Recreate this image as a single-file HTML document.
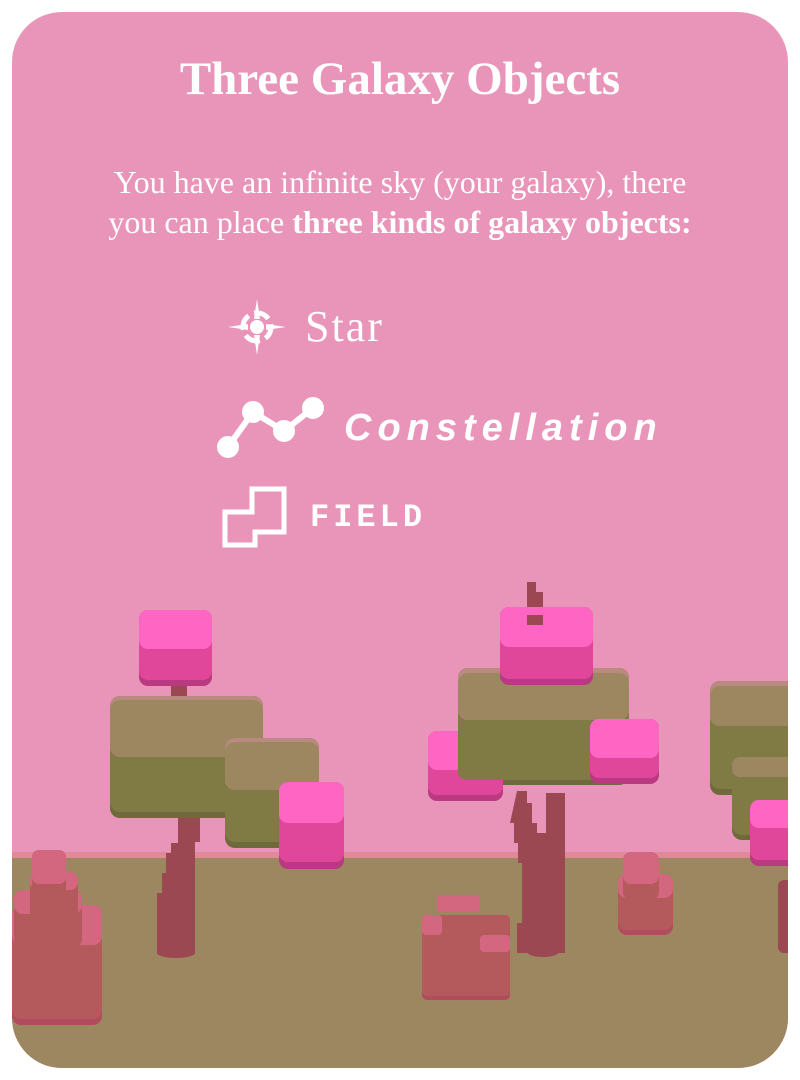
<!DOCTYPE html>
<html><head><meta charset="utf-8"><style>
html,body{margin:0;padding:0;background:#fff;}
body{width:800px;height:1080px;position:relative;overflow:hidden;}
.card{position:absolute;left:12px;top:12px;width:776px;height:1056px;border-radius:50px;background:#e994b9;overflow:hidden;}
.t{position:absolute;left:0;width:800px;text-align:center;color:#fff;font-family:"Liberation Serif",serif;}
</style></head><body>
<div class="card"></div>
<svg style="position:absolute;left:0;top:0" width="800" height="1080">
<defs><clipPath id="c"><rect x="12" y="12" width="776" height="1056" rx="50"/></clipPath></defs>
<g clip-path="url(#c)">
<rect x="0" y="852" width="800" height="8" fill="#e08a98"/>
<rect x="0" y="858" width="800" height="230" fill="#9d8760"/>
<rect x="171" y="680" width="16" height="48" rx="3" fill="#9c4852"/>
<rect x="139" y="610" width="73" height="76" rx="9" fill="#b93a80"/>
<rect x="139" y="610" width="73" height="70" rx="9" fill="#e0479a"/>
<rect x="139" y="610" width="73" height="39" rx="9" fill="#ff66c4"/>
<path d="M178 812h22v30h-5v111h-38v-60h5v-20h4v-20h5v-10h7z" fill="#9c4852"/>
<ellipse cx="176" cy="953" rx="19" ry="5" fill="#9c4852"/>
<rect x="110" y="696" width="153" height="122" rx="10" fill="#6f6a3c"/>
<rect x="110" y="696" width="153" height="116" rx="10" fill="#807a44"/>
<rect x="110" y="696" width="153" height="61" rx="10" fill="#b88a80"/>
<rect x="110" y="700" width="153" height="57" rx="10" fill="#9d8760"/>
<rect x="225" y="738" width="94" height="110" rx="10" fill="#6f6a3c"/>
<rect x="225" y="738" width="94" height="104" rx="10" fill="#807a44"/>
<rect x="225" y="738" width="94" height="52" rx="10" fill="#b88a80"/>
<rect x="225" y="742" width="94" height="48" rx="10" fill="#9d8760"/>
<rect x="279" y="782" width="65" height="87" rx="9" fill="#b93a80"/>
<rect x="279" y="782" width="65" height="80" rx="9" fill="#e0479a"/>
<rect x="279" y="782" width="65" height="41" rx="9" fill="#ff66c4"/>
<rect x="12" y="905" width="90" height="120" rx="9" fill="#b04c5e"/>
<rect x="12" y="905" width="90" height="114" rx="9" fill="#b55a5c"/>
<rect x="12" y="905" width="90" height="40" rx="9" fill="#d3677f"/>
<rect x="14" y="890" width="68" height="58" rx="9" fill="#b55a5c"/>
<rect x="14" y="890" width="68" height="24" rx="9" fill="#d3677f"/>
<rect x="30" y="872" width="48" height="52" rx="8" fill="#b55a5c"/>
<rect x="30" y="872" width="48" height="18" rx="8" fill="#d3677f"/>
<rect x="32" y="850" width="34" height="50" rx="7" fill="#b55a5c"/>
<rect x="32" y="850" width="34" height="34" rx="7" fill="#d3677f"/>
<path d="M527 582h9v10h7v33h-16z" fill="#9c4852"/>
<rect x="533" y="680" width="16" height="26" rx="3" fill="#9c4852"/>
<path d="M517 791h10v12h5v20h5v10h9v-40h19v160h-48v-30h5v-60h-4v-20h-4v-20h-4z" fill="#9c4852"/>
<ellipse cx="543" cy="952" rx="16" ry="5" fill="#9c4852"/>
<rect x="458" y="668" width="171" height="117" rx="10" fill="#6f6a3c"/>
<rect x="458" y="668" width="171" height="112" rx="10" fill="#807a44"/>
<rect x="458" y="668" width="171" height="52" rx="10" fill="#b88a80"/>
<rect x="458" y="673" width="171" height="47" rx="10" fill="#9d8760"/>
<rect x="500" y="607" width="93" height="78" rx="9" fill="#b93a80"/>
<rect x="500" y="607" width="93" height="72" rx="9" fill="#e0479a"/>
<rect x="500" y="607" width="93" height="40" rx="9" fill="#ff66c4"/>
<rect x="527" y="615" width="16" height="10" fill="#9c4852"/>
<rect x="428" y="731" width="75" height="70" rx="9" fill="#b93a80"/>
<rect x="428" y="731" width="75" height="64" rx="9" fill="#e0479a"/>
<rect x="428" y="731" width="75" height="39" rx="9" fill="#ff66c4"/>
<rect x="458" y="720" width="60" height="60" rx="8" fill="#807a44"/>
<rect x="590" y="719" width="69" height="65" rx="9" fill="#b93a80"/>
<rect x="590" y="719" width="69" height="59" rx="9" fill="#e0479a"/>
<rect x="590" y="719" width="69" height="39" rx="9" fill="#ff66c4"/>
<rect x="618" y="874" width="55" height="61" rx="9" fill="#b04c5e"/>
<rect x="618" y="874" width="55" height="56" rx="9" fill="#b55a5c"/>
<rect x="618" y="874" width="55" height="24" rx="9" fill="#d3677f"/>
<rect x="623" y="852" width="36" height="48" rx="8" fill="#b55a5c"/>
<rect x="623" y="852" width="36" height="32" rx="8" fill="#d3677f"/>
<rect x="422" y="915" width="88" height="85" rx="5" fill="#b04c5e"/>
<rect x="422" y="915" width="88" height="81" rx="5" fill="#b55a5c"/>
<rect x="422" y="915" width="20" height="20" rx="4" fill="#d3677f"/>
<rect x="437" y="895" width="43" height="17" rx="4" fill="#d3677f"/>
<rect x="480" y="935" width="30" height="17" rx="4" fill="#d3677f"/>
<rect x="778" y="880" width="20" height="73" rx="6" fill="#9c4852"/>
<rect x="710" y="681" width="90" height="114" rx="10" fill="#6f6a3c"/>
<rect x="710" y="681" width="90" height="108" rx="10" fill="#807a44"/>
<rect x="710" y="681" width="90" height="45" rx="10" fill="#b88a80"/>
<rect x="710" y="686" width="90" height="40" rx="10" fill="#9d8760"/>
<rect x="732" y="757" width="70" height="83" rx="10" fill="#6f6a3c"/>
<rect x="732" y="757" width="70" height="78" rx="10" fill="#807a44"/>
<rect x="732" y="757" width="70" height="20" rx="8" fill="#9d8760"/>
<rect x="750" y="800" width="50" height="66" rx="9" fill="#b93a80"/>
<rect x="750" y="800" width="50" height="60" rx="9" fill="#e0479a"/>
<rect x="750" y="800" width="50" height="28" rx="9" fill="#ff66c4"/>
</g>
<g fill="#fff">
<circle cx="257" cy="327" r="7"/>
<circle cx="257" cy="327" r="14" fill="none" stroke="#fff" stroke-width="5" stroke-dasharray="16 6" stroke-dashoffset="3"/>
<path d="M257 299l3 20h-6z M257 355l3-20h-6z M228 327l20 3v-6z M286 327l-20 3v-6z"/>
</g>
<g stroke="#fff" stroke-width="6" fill="#fff">
<polyline points="228,447 253,412 284,431 313,408" fill="none"/>
<circle cx="228" cy="447" r="8"/><circle cx="253" cy="412" r="8"/><circle cx="284" cy="431" r="8"/><circle cx="313" cy="408" r="8"/>
</g>
<path d="M225 512H252V489H284V532H255V545H225Z" fill="none" stroke="#fff" stroke-width="5"/>
</svg>
<div class="t" style="top:52px;font-size:47px;font-weight:bold;">Three Galaxy Objects</div>
<div class="t" style="top:162px;font-size:32px;line-height:40px;">You have an infinite sky (your galaxy), there<br>you can place <b>three kinds of galaxy objects:</b></div>
<div style="position:absolute;left:305px;top:301px;color:#fff;font-family:'Liberation Serif',serif;font-size:44px;letter-spacing:2px;">Star</div>
<div style="position:absolute;left:344px;top:407px;color:#fff;font-family:'Liberation Sans',sans-serif;font-weight:bold;font-style:italic;font-size:38px;letter-spacing:6px;">Constellation</div>
<div style="position:absolute;left:310px;top:499px;color:#fff;font-family:'Liberation Mono',monospace;font-weight:bold;font-size:32px;letter-spacing:4px;">FIELD</div>
</body></html>
